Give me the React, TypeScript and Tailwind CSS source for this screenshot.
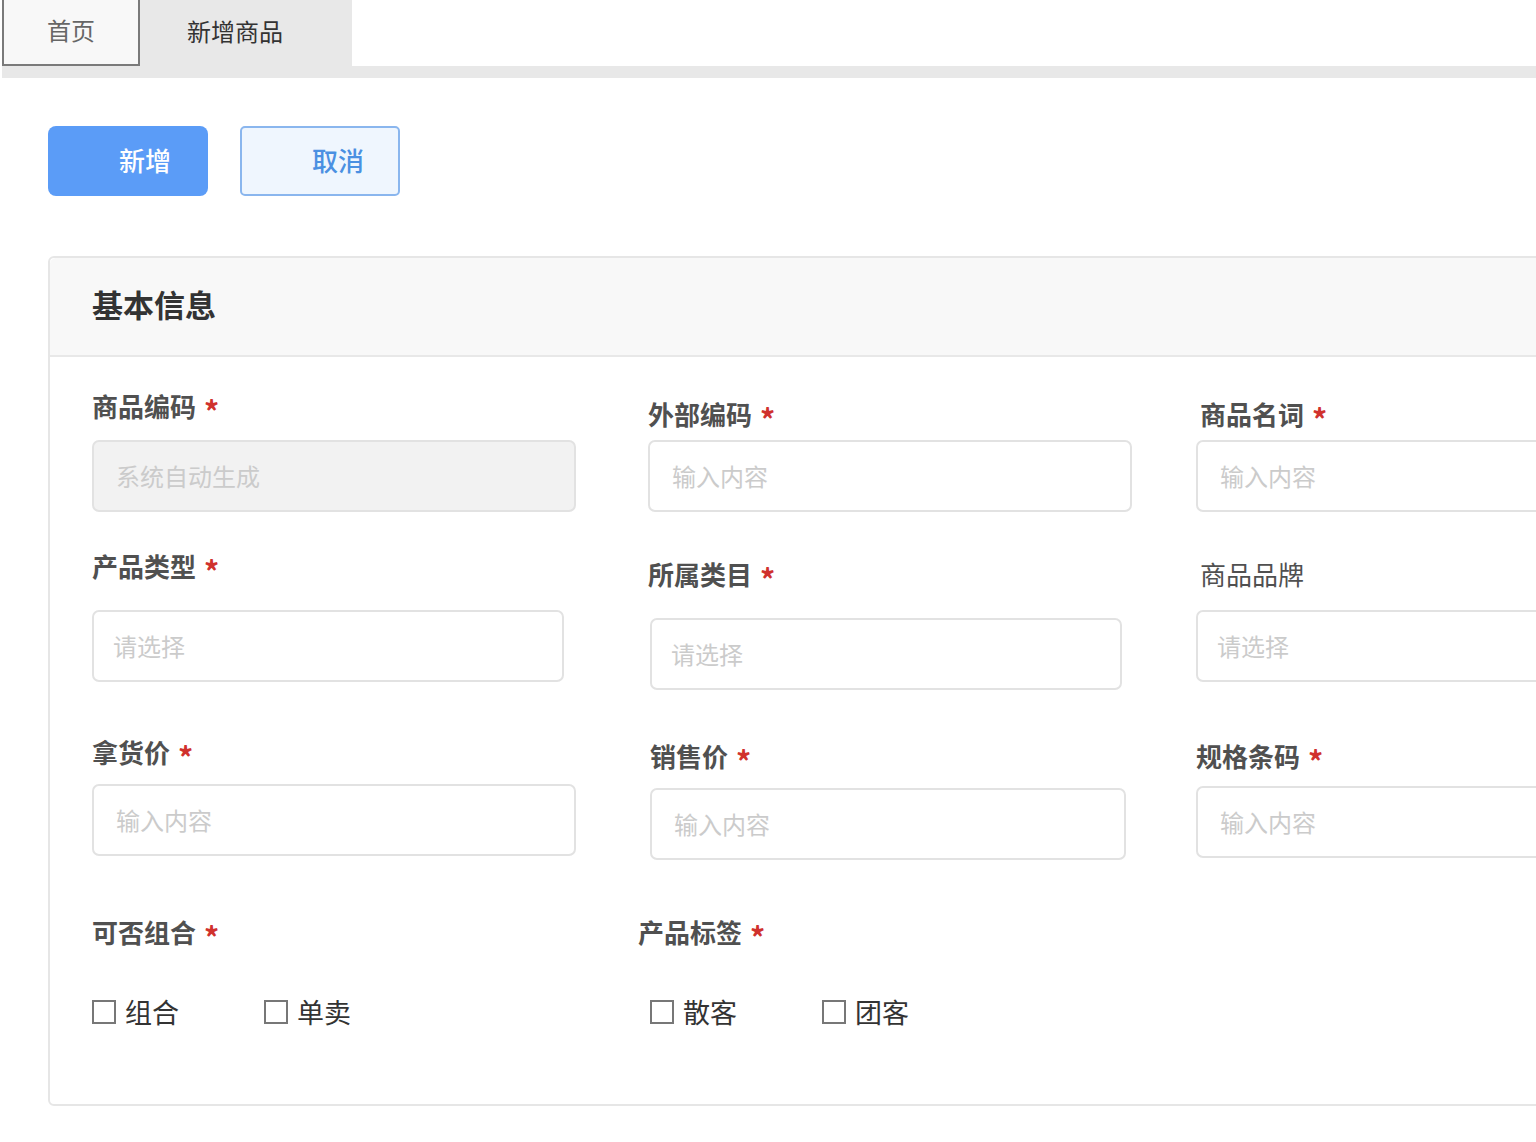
import React from "react";

const FONT = "font-['Noto_Sans_CJK_SC','Noto_Sans',sans-serif]";

function Star() {
  return (
    <span className="ml-[8px] text-[30px] leading-none font-semibold text-[#d0312d] translate-y-[3px]">
      *
    </span>
  );
}

function Label({
  text,
  required = true,
  className = "",
}: {
  text: string;
  required?: boolean;
  className?: string;
}) {
  return (
    <div className={`flex items-center h-[32px] leading-[32px] text-[26px] font-bold text-[#505050] whitespace-nowrap ${className}`}>
      <span className="-translate-y-[1px]">{text}</span>
      {required && <Star />}
    </div>
  );
}

function Box({
  placeholder,
  className = "",
  select = false,
  disabled = false,
}: {
  placeholder: string;
  className?: string;
  select?: boolean;
  disabled?: boolean;
}) {
  return (
    <div
      className={`h-[72px] shrink-0 flex items-center border-2 rounded-[7px] border-[#e2e2e2] ${
        disabled ? "bg-[#f2f2f2]" : "bg-white"
      } ${select ? "pl-[19px]" : "pl-[22px]"} ${className}`}
    >
      <span className="text-[24px] text-[#cbcbcb] leading-none">{placeholder}</span>
    </div>
  );
}

function Check({ text }: { text: string }) {
  return (
    <div className="w-[172px] flex items-center h-[32px]">
      <div className="w-[24px] h-[24px] border-2 border-[#777777] bg-white" />
      <span className="ml-[9px] text-[27px] text-[#333333] leading-none -translate-y-[1px]">{text}</span>
    </div>
  );
}

export default function App() {
  return (
    <div className={`w-full min-h-[1142px] overflow-hidden bg-white ${FONT}`}>
      {/* tab bar */}
      <div className="ml-[2px]">
        <div className="flex h-[66px]">
          <div className="w-[138px] h-[66px] border-2 border-t-0 border-[#7a7a7a] bg-[#f8f8f8] flex items-center justify-center pb-[4px]">
            <span className="text-[24px] text-[#666666]">首页</span>
          </div>
          <div className="w-[212px] h-[66px] bg-[#e8e8e8] flex items-center pl-[47px] pb-[4px]">
            <span className="text-[24px] text-[#333333]">新增商品</span>
          </div>
        </div>
        <div className="h-[12px] bg-[#e8e8e8]" />
      </div>

      {/* buttons */}
      <div className="flex gap-[32px] ml-[48px] mt-[48px]">
        <div className="w-[160px] h-[70px] rounded-[8px] bg-[#5b9cf7] flex items-center pl-[71px] pb-[4px]">
          <span className="text-[26px] text-white font-medium">新增</span>
        </div>
        <div className="w-[160px] h-[70px] rounded-[5px] bg-[#eff6fe] border-2 border-[#8ab6ee] flex items-center pl-[70px] pb-[4px]">
          <span className="text-[26px] text-[#4a90e2] font-medium">取消</span>
        </div>
      </div>

      {/* card */}
      <div className="ml-[48px] mt-[60px] w-[1620px] border-2 border-[#e6e6e6] rounded-[6px]">
        <div className="h-[99px] bg-[#f8f8f8] border-b-2 border-[#e8e8e8] flex items-center pl-[42px] pb-[5px] rounded-t-[6px]">
          <span className="text-[31px] font-bold text-[#333333]">基本信息</span>
        </div>

        <div className="pl-[42px] pb-[76px]">
          {/* row 1 */}
          <div className="flex items-start">
            <div className="w-[556px] shrink-0 flex flex-col">
              <Label text="商品编码" className="mt-[34px]" />
              <Box placeholder="系统自动生成" disabled className="mt-[17px] w-[484px]" />
            </div>
            <div className="w-[548px] shrink-0 flex flex-col">
              <Label text="外部编码" className="mt-[42px]" />
              <Box placeholder="输入内容" className="mt-[9px] w-[484px]" />
            </div>
            <div className="flex-1 flex flex-col">
              <Label text="商品名词" className="mt-[42px] ml-[4px] text-[#1a1a1a]" />
              <Box placeholder="输入内容" className="mt-[9px] w-[484px]" />
            </div>
          </div>

          {/* row 2 */}
          <div className="flex items-start">
            <div className="w-[556px] shrink-0 flex flex-col">
              <Label text="产品类型" className="mt-[39px]" />
              <Box placeholder="请选择" select className="mt-[27px] w-[472px]" />
            </div>
            <div className="w-[548px] shrink-0 flex flex-col">
              <Label text="所属类目" className="mt-[47px]" />
              <Box placeholder="请选择" select className="mt-[27px] ml-[2px] w-[472px]" />
            </div>
            <div className="flex-1 flex flex-col">
              <Label text="商品品牌" required={false} className="mt-[47px] ml-[4px] !font-normal text-[#1a1a1a]" />
              <Box placeholder="请选择" select className="mt-[19px] w-[484px]" />
            </div>
          </div>

          {/* row 3 */}
          <div className="flex items-start">
            <div className="w-[556px] shrink-0 flex flex-col">
              <Label text="拿货价" className="mt-[47px]" />
              <Box placeholder="输入内容" className="mt-[15px] w-[484px]" />
            </div>
            <div className="w-[548px] shrink-0 flex flex-col">
              <Label text="销售价" className="mt-[51px] ml-[2px]" />
              <Box placeholder="输入内容" className="mt-[15px] ml-[2px] w-[476px]" />
            </div>
            <div className="flex-1 flex flex-col">
              <Label text="规格条码" className="mt-[51px]" />
              <Box placeholder="输入内容" className="mt-[13px] w-[484px]" />
            </div>
          </div>

          {/* row 4 */}
          <div className="flex items-start">
            <div className="w-[556px] shrink-0 flex flex-col">
              <Label text="可否组合" className="mt-[57px] !font-semibold text-[#4a4a4a]" />
              <div className="flex mt-[47px]">
                <Check text="组合" />
                <Check text="单卖" />
              </div>
            </div>
            <div className="w-[548px] shrink-0 flex flex-col">
              <Label text="产品标签" className="mt-[57px] -ml-[10px] !font-semibold text-[#4a4a4a]" />
              <div className="flex mt-[47px] ml-[2px]">
                <Check text="散客" />
                <Check text="团客" />
              </div>
            </div>
          </div>
        </div>
      </div>
    </div>
  );
}
